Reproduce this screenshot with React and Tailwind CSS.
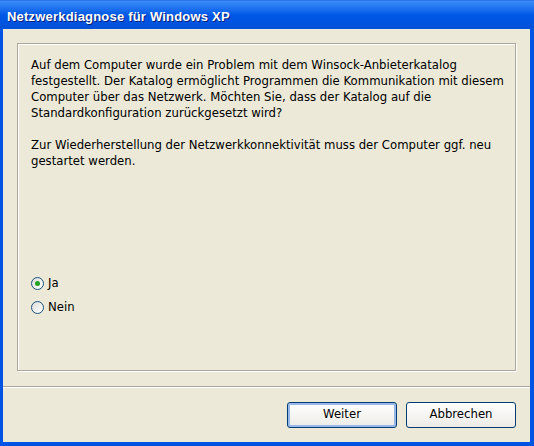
export default function App() {
  return (
    <div
      className="w-[534px] h-[446px] flex flex-col bg-[#0054e3] overflow-hidden"
      style={{ fontFamily: '"DejaVu Sans", Verdana, sans-serif' }}
    >
      <div className="h-[29px] shrink-0 flex items-center pl-[7px] pt-[3px] bg-gradient-to-b from-[#3b8cf7] via-[#0058e6] to-[#0050d8] border-t border-[#2d74ef]">
        <span
          className="text-white font-bold text-[13px] tracking-[0.2px] [text-shadow:1px_1px_0_#0a1e78]"
          style={{ fontFamily: '"Liberation Sans", Arial, sans-serif' }}
        >
          Netzwerkdiagnose für Windows XP
        </span>
      </div>
      <div className="flex-1 flex flex-col bg-[#ece9d8] ml-[3px] mr-[4px] mb-[4px]">
        <div className="mx-[14px] mt-[14px] h-[328px] border border-[#aca899] shadow-[inset_1px_1px_0_#fff,1px_1px_0_#fff] flex flex-col pl-[13px] pt-[13px] text-[11.7px] leading-[16px] text-black whitespace-nowrap">
          <p>
            Auf dem Computer wurde ein Problem mit dem Winsock-Anbieterkatalog
            <br />
            festgestellt. Der Katalog ermöglicht Programmen die Kommunikation mit diesem
            <br />
            Computer über das Netzwerk. Möchten Sie, dass der Katalog auf die
            <br />
            Standardkonfiguration zurückgesetzt wird?
          </p>
          <p className="mt-4">
            Zur Wiederherstellung der Netzwerkkonnektivität muss der Computer ggf. neu
            <br />
            gestartet werden.
          </p>
          <div className="mt-[106px] flex flex-col gap-[8px]">
            <label className="flex items-center gap-[4px]">
              <span className="w-[13px] h-[13px] rounded-full border border-[#1c5180] bg-gradient-to-br from-[#dcdcd7] to-white flex items-center justify-center">
                <span className="w-[5px] h-[5px] rounded-full bg-[#21a121]" />
              </span>
              <span>Ja</span>
            </label>
            <label className="flex items-center gap-[4px]">
              <span className="w-[13px] h-[13px] rounded-full border border-[#1c5180] bg-gradient-to-br from-[#dcdcd7] to-white" />
              <span>Nein</span>
            </label>
          </div>
        </div>
        <div className="mt-[15px] h-[2px] border-t border-[#aca899] bg-white" />
        <div className="flex justify-end gap-[9px] pr-[14px] mt-[14px]">
          <button className="w-[110px] h-[26px] rounded-[3px] border border-[#003c74] bg-gradient-to-b from-white to-[#ecebe6] text-[11.7px] text-black shadow-[inset_0_0_0_2px_#98b8ea]">
            Weiter
          </button>
          <button className="w-[110px] h-[26px] rounded-[3px] border border-[#003c74] bg-gradient-to-b from-white to-[#ecebe6] text-[11.7px] text-black">
            Abbrechen
          </button>
        </div>
      </div>
    </div>
  );
}
